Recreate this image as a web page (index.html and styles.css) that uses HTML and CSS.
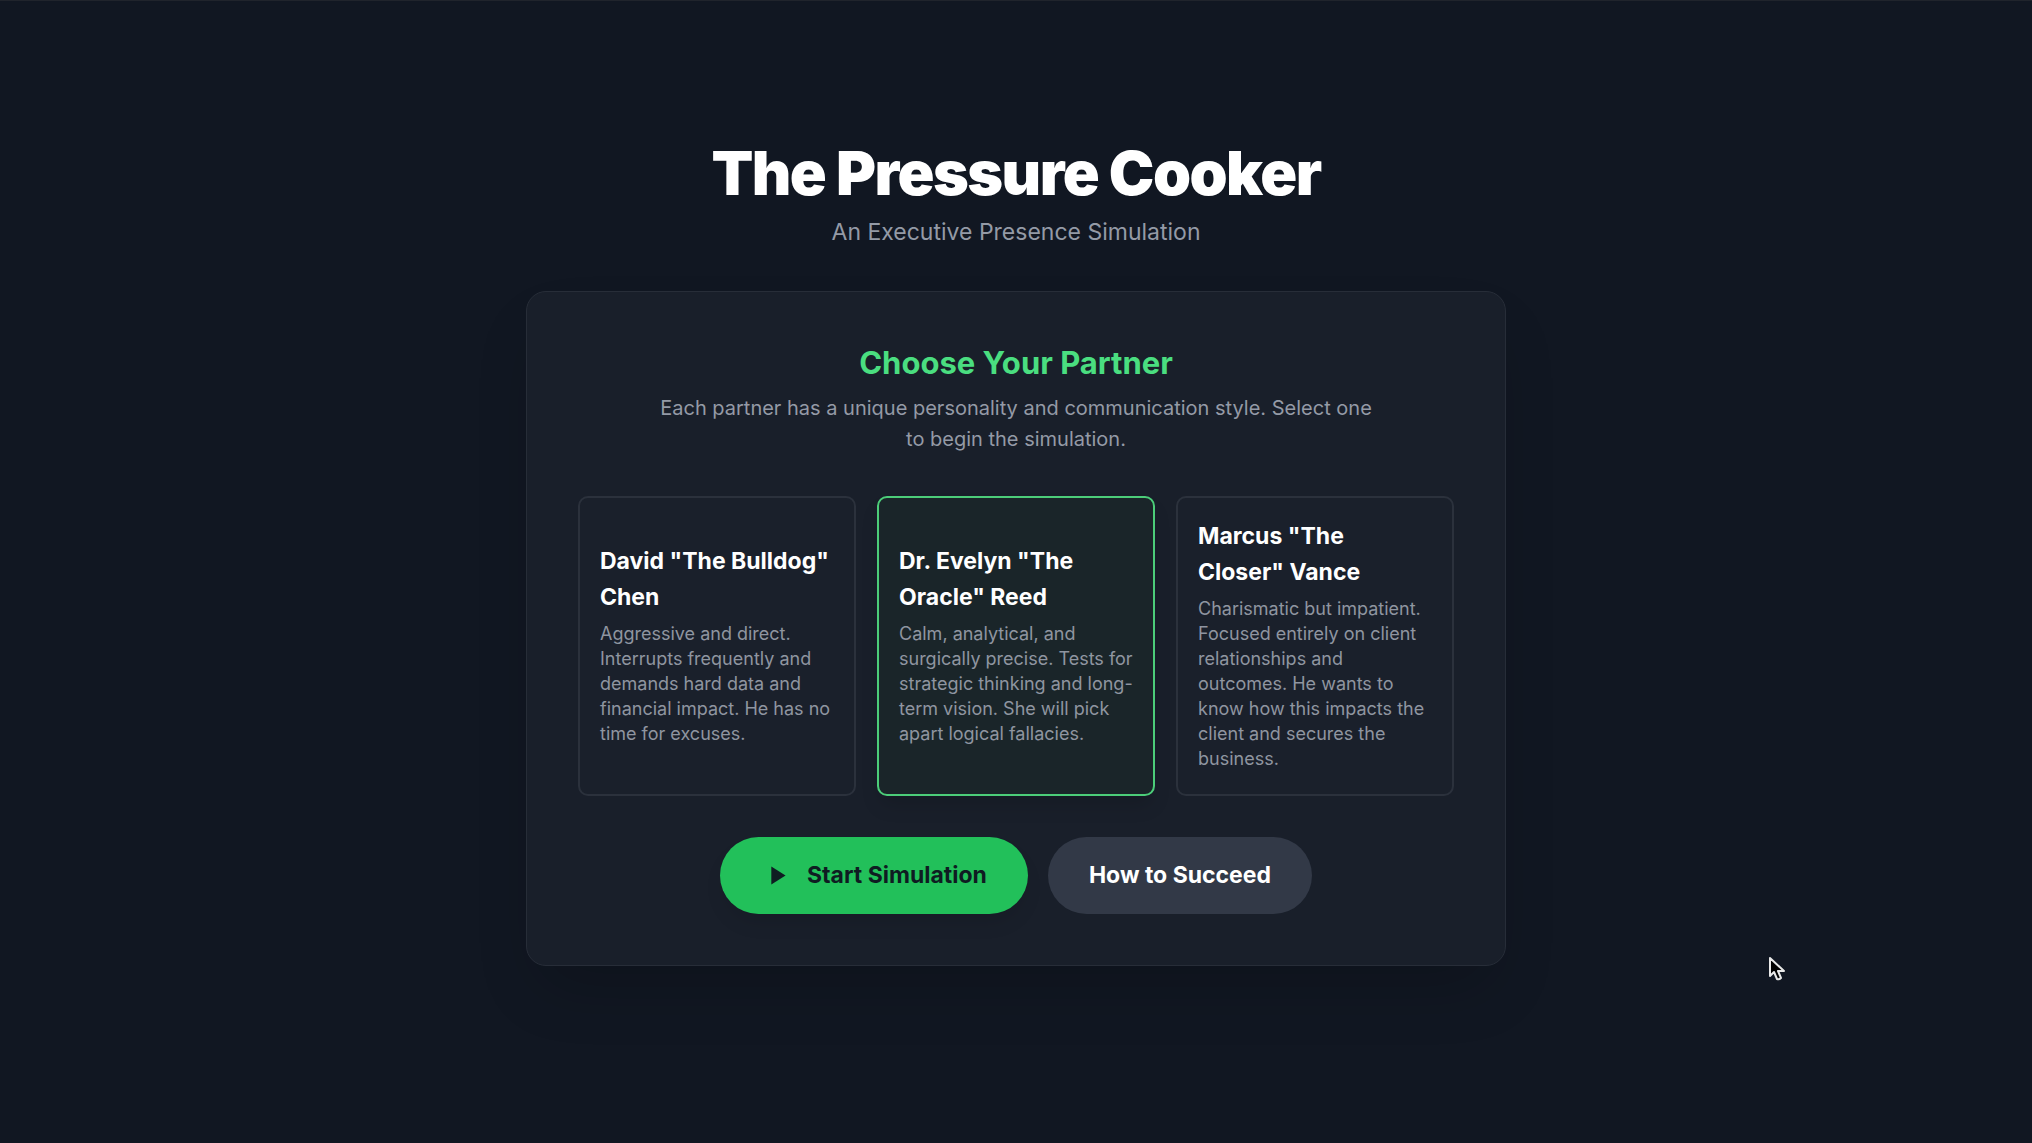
FILE: index.html
```html
<!DOCTYPE html>
<html lang="en">
<head>
  <meta charset="utf-8">
  <meta name="viewport" content="width=device-width, initial-scale=1">
  <title>The Pressure Cooker</title>
  <link rel="stylesheet" href="styles.css">
</head>
<body>
  <main class="page">
    <header class="hero">
      <h1 class="hero-title">The Pressure Cooker</h1>
      <p class="hero-subtitle">An Executive Presence Simulation</p>
    </header>

    <section class="panel" aria-labelledby="choose-title">
      <div class="intro">
        <h2 class="intro-title" id="choose-title">Choose Your Partner</h2>
        <p class="intro-text">Each partner has a unique personality and communication style. Select one to begin the simulation.</p>
      </div>

      <div class="partners">
        <button class="partner" type="button" aria-pressed="false">
          <span class="partner-name">David "The Bulldog" Chen</span>
          <span class="partner-bio">Aggressive and direct. Interrupts frequently and demands hard data and financial impact. He has no time for excuses.</span>
        </button>
        <button class="partner partner-selected" type="button" aria-pressed="true">
          <span class="partner-name">Dr. Evelyn "The Oracle" Reed</span>
          <span class="partner-bio">Calm, analytical, and surgically precise. Tests for strategic thinking and long-term vision. She will pick apart logical fallacies.</span>
        </button>
        <button class="partner" type="button" aria-pressed="false">
          <span class="partner-name">Marcus "The Closer" Vance</span>
          <span class="partner-bio">Charismatic but impatient. Focused entirely on client relationships and outcomes. He wants to know how this impacts the client and secures the business.</span>
        </button>
      </div>

      <div class="actions">
        <button class="action action-primary" type="button">
          <svg class="play" viewBox="0 0 24 24" aria-hidden="true"><path d="M8 5v14l11-7z"/></svg>
          Start Simulation
        </button>
        <button class="action action-secondary" type="button">How to Succeed</button>
      </div>
    </section>
  </main>

  <svg class="pointer" viewBox="0 0 18 26" aria-hidden="true"><path d="M2 2v18l4-4 3 7q2 1 4-1l-3-7h6z"/></svg>
</body>
</html>
```
FILE: styles.css
```css
*,
*::before,
*::after {
  box-sizing: border-box;
}

body {
  margin: 0;
  background: #111722;
  color: #fff;
  font-family: Inter, "Liberation Sans", sans-serif;
}

h1,
h2,
p {
  margin: 0;
}

button {
  font: inherit;
  color: inherit;
  cursor: pointer;
}

.page {
  display: flex;
  flex-direction: column;
  align-items: center;
  justify-content: center;
  gap: 41px;
  min-height: 100vh;
  padding: 0 20px 36px;
  border-top: 1px solid #20242c;
}

.hero {
  display: flex;
  flex-direction: column;
  gap: 10px;
  text-align: center;
}

.hero-title {
  font-size: 61px;
  font-weight: 900;
  line-height: 61px;
  letter-spacing: -0.025em;
}

.hero-subtitle {
  color: #949aa6;
  font-size: 23px;
  line-height: 36px;
}

.panel {
  display: flex;
  flex-direction: column;
  gap: 41px;
  width: 100%;
  max-width: 980px;
  padding: 51px;
  background: #191f2a;
  border: 1px solid #272d38;
  border-radius: 20px;
  box-shadow: 0 32px 64px -15px rgba(0, 0, 0, 0.2);
}

.intro {
  display: flex;
  flex-direction: column;
  align-items: center;
  gap: 10px;
  text-align: center;
}

.intro-title {
  color: #4ade80;
  font-size: 31px;
  font-weight: 700;
  line-height: 40px;
}

.intro-text {
  max-width: 728px;
  color: #949aa6;
  font-size: 20px;
  line-height: 31px;
}

.partners {
  display: grid;
  grid-template-columns: repeat(3, 1fr);
  gap: 21px;
}

.partner {
  display: flex;
  flex-direction: column;
  justify-content: center;
  gap: 6px;
  padding: 20px 20px 23px;
  background: #1a202b;
  border: 2px solid #2b313c;
  border-radius: 10px;
  text-align: left;
}

.partner-selected {
  background: #1a2529;
  border-color: #4ccd79;
  box-shadow: 0 12px 20px -4px rgba(0, 0, 0, 0.15);
}

.partner-name {
  font-size: 23px;
  font-weight: 700;
  line-height: 36px;
}

.partner-bio {
  color: #8f95a0;
  font-size: 18px;
  line-height: 25px;
}

.actions {
  display: flex;
  justify-content: center;
  gap: 20px;
}

.action {
  display: flex;
  align-items: center;
  gap: 15px;
  padding: 20px 41px;
  border: 0;
  border-radius: 40px;
  font-size: 23px;
  font-weight: 700;
  line-height: 37px;
}

.action-primary {
  background: #22c05a;
  color: #0f1c22;
  box-shadow: 0 12px 20px -4px rgba(0, 0, 0, 0.1);
}

.action-secondary {
  background: #323947;
}

.play {
  width: 31px;
  height: 31px;
  fill: currentColor;
}

.pointer {
  position: absolute;
  left: 1768px;
  top: 956px;
  width: 18px;
  height: 26px;
  fill: #000;
  stroke: #e8e8e8;
  stroke-width: 2;
  stroke-linejoin: round;
  pointer-events: none;
}

@media (max-width: 800px) {
  .partners {
    grid-template-columns: 1fr;
  }

  .actions {
    flex-wrap: wrap;
  }
}
```
